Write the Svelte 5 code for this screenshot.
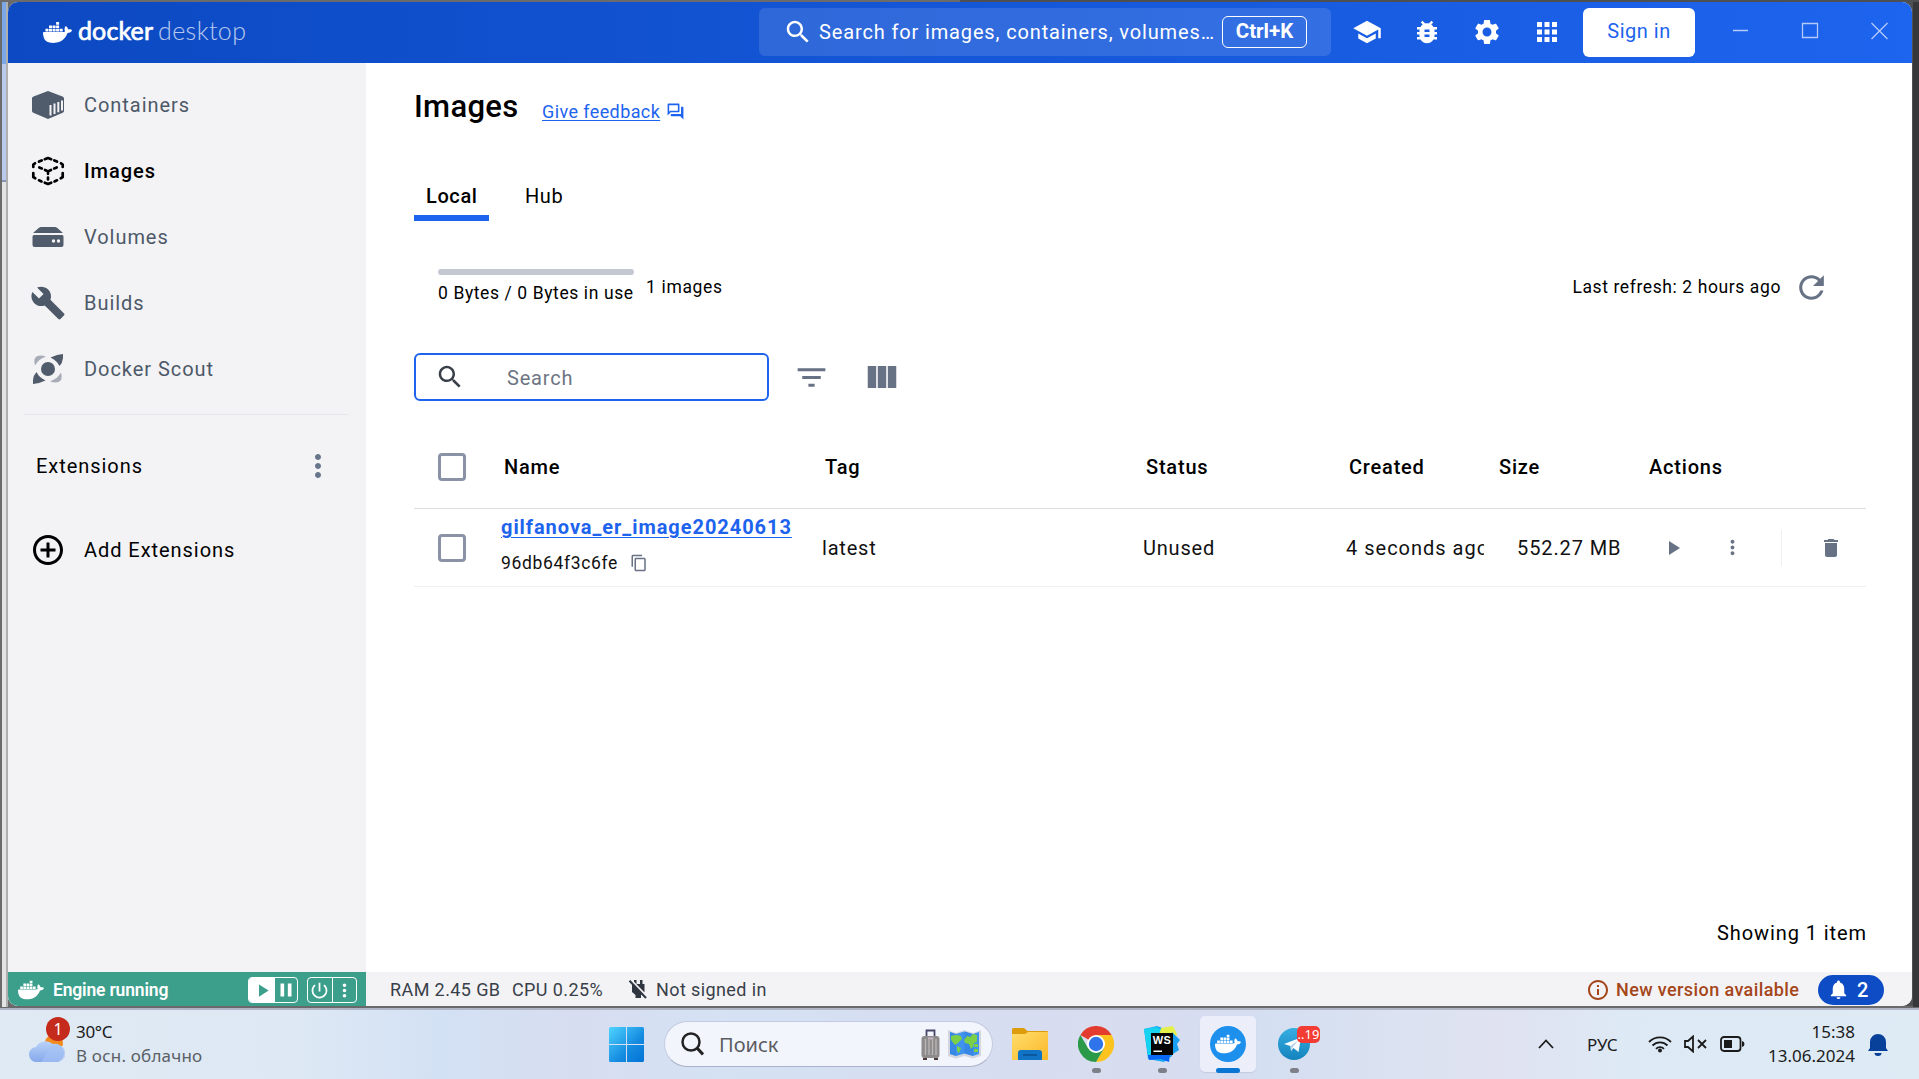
<script>
  const paths = {
    search: 'M15.5 14h-.79l-.28-.27C15.41 12.59 16 11.11 16 9.5 16 5.91 13.09 3 9.5 3S3 5.91 3 9.5 5.91 16 9.5 16c1.61 0 3.09-.59 4.23-1.57l.27.28v.79l5 4.99L20.49 19l-4.99-5zm-6 0C7.01 14 5 11.99 5 9.5S7.01 5 9.5 5 14 7.01 14 9.5 11.99 14 9.5 14z',
    school: 'M5 13.18v4L12 21l7-3.82v-4L12 17l-7-3.82zM12 3 1 9l11 6 9-4.91V17h2V9L12 3z',
    bug: 'M20 8h-2.81c-.45-.78-1.07-1.45-1.82-1.96L17 4.41 15.59 3l-2.17 2.17C12.96 5.06 12.49 5 12 5c-.49 0-.96.06-1.41.17L8.41 3 7 4.41l1.62 1.63C7.88 6.55 7.26 7.22 6.81 8H4v2h2.09c-.05.33-.09.66-.09 1v1H4v2h2v1c0 .34.04.67.09 1H4v2h2.81c1.04 1.79 2.97 3 5.19 3s4.15-1.21 5.19-3H20v-2h-2.09c.05-.33.09-.66.09-1v-1h2v-2h-2v-1c0-.34-.04-.67-.09-1H20V8zm-6 8h-4v-2h4v2zm0-4h-4v-2h4v2z',
    gear: 'M19.14 12.94c.04-.3.06-.61.06-.94 0-.32-.02-.64-.07-.94l2.03-1.58c.18-.14.23-.41.12-.61l-1.92-3.32c-.12-.22-.37-.29-.59-.22l-2.39.96c-.5-.38-1.03-.7-1.62-.94l-.36-2.54c-.04-.24-.24-.41-.48-.41h-3.84c-.24 0-.43.17-.47.41l-.36 2.54c-.59.24-1.13.57-1.62.94l-2.39-.96c-.22-.08-.47 0-.59.22L2.74 8.87c-.12.21-.08.47.12.61l2.03 1.58c-.05.3-.09.63-.09.94s.02.64.07.94l-2.03 1.58c-.18.14-.23.41-.12.61l1.92 3.32c.12.22.37.29.59.22l2.39-.96c.5.38 1.03.7 1.62.94l.36 2.54c.05.24.24.41.48.41h3.84c.24 0 .44-.17.47-.41l.36-2.54c.59-.24 1.13-.56 1.62-.94l2.39.96c.22.08.47 0 .59-.22l1.92-3.32c.12-.22.07-.47-.12-.61l-2.01-1.58zM12 15.6c-1.98 0-3.6-1.62-3.6-3.6s1.62-3.6 3.6-3.6 3.6 1.62 3.6 3.6-1.62 3.6-3.6 3.6z',
    apps: 'M4 8h4V4H4v4zm6 12h4v-4h-4v4zm-6 0h4v-4H4v4zm0-6h4v-4H4v4zm6 0h4v-4h-4v4zm6-10v4h4V4h-4zm-6 4h4V4h-4v4zm6 6h4v-4h-4v4zm0 6h4v-4h-4v4z',
    wrench: 'M22.7 19l-9.1-9.1c.9-2.3.4-5-1.5-6.9-2-2-5-2.4-7.4-1.3L9 6 6 9 1.6 4.7C.4 7.1.9 10.1 2.9 12.1c1.9 1.9 4.6 2.4 6.9 1.5l9.1 9.1c.4.4 1 .4 1.4 0l2.3-2.3c.5-.4.5-1.1.1-1.4z',
    forum: 'M15 4v7H5.17L4 12.17V4h11m1-2H3c-.55 0-1 .45-1 1v14l4-4h10c.55 0 1-.45 1-1V3c0-.55-.45-1-1-1zm5 4h-2v9H6v2c0 .55.45 1 1 1h11l4 4V7c0-.55-.45-1-1-1z',
    refresh: 'M17.65 6.35C16.2 4.9 14.21 4 12 4c-4.42 0-7.99 3.58-7.99 8s3.57 8 7.99 8c3.73 0 6.84-2.55 7.73-6h-2.08c-.82 2.33-3.04 4-5.65 4-3.31 0-6-2.69-6-6s2.69-6 6-6c1.66 0 3.14.69 4.22 1.78L13 11h7V4l-2.35 2.35z',
    addCircle: 'M13 7h-2v4H7v2h4v4h2v-4h4v-2h-4V7zm-1-5C6.48 2 2 6.48 2 12s4.48 10 10 10 10-4.48 10-10S17.52 2 12 2zm0 18c-4.41 0-8-3.59-8-8s3.59-8 8-8 8 3.59 8 8-3.59 8-8 8z',
    info: 'M11 7h2v2h-2zm0 4h2v6h-2zm1-9C6.48 2 2 6.48 2 12s4.48 10 10 10 10-4.48 10-10S17.52 2 12 2zm0 18c-4.41 0-8-3.59-8-8s3.59-8 8-8 8 3.59 8 8-3.59 8-8 8z',
    copy: 'M16 1H4c-1.1 0-2 .9-2 2v14h2V3h12V1zm3 4H8c-1.1 0-2 .9-2 2v14c0 1.1.9 2 2 2h11c1.1 0 2-.9 2-2V7c0-1.1-.9-2-2-2zm0 16H8V7h11v14z',
    trash: 'M6 19c0 1.1.9 2 2 2h8c1.1 0 2-.9 2-2V7H6v12zM19 4h-3.5l-1-1h-5l-1 1H5v2h14V4z',
    bell: 'M12 22c1.1 0 2-.9 2-2h-4c0 1.1.89 2 2 2zm6-6v-5c0-3.07-1.64-5.64-4.5-6.32V4c0-.83-.67-1.5-1.5-1.5s-1.5.67-1.5 1.5v.68C7.63 5.36 6 7.92 6 11v5l-2 2v1h16v-1l-2-2z',
    power: 'M13 3h-2v10h2V3zm4.83 2.17-1.42 1.42C17.99 7.86 19 9.81 19 12c0 3.87-3.13 7-7 7s-7-3.13-7-7c0-2.19 1.01-4.14 2.58-5.42L6.17 5.17C4.23 6.82 3 9.26 3 12c0 4.97 4.03 9 9 9s9-4.03 9-9c0-2.74-1.23-5.18-3.17-6.83z',
    columns: 'M14.67 5v14H9.33V5h5.34zm1 14H21V5h-5.33v14zm-7.34 0V5H3v14h5.33z',
    filter: 'M10 18h4v-2h-4v2zM3 6v2h18V6H3zm3 7h12v-2H6v2z',
    dots: 'M12 8c1.1 0 2-.9 2-2s-.9-2-2-2-2 .9-2 2 .9 2 2 2zm0 2c-1.1 0-2 .9-2 2s.9 2 2 2 2-.9 2-2-.9-2-2-2zm0 6c-1.1 0-2 .9-2 2s.9 2 2 2 2-.9 2-2-.9-2-2-2z',
    play: 'M8 5v14l11-7z',
    pause: 'M6 19h4V5H6v14zm8-14v14h4V5h-4z',
    whale: 'M13.983 11.078h2.119a.186.186 0 00.186-.185V9.006a.186.186 0 00-.186-.186h-2.119a.185.185 0 00-.185.185v1.888c0 .102.083.185.185.185m-2.954-5.43h2.118a.186.186 0 00.186-.186V3.574a.186.186 0 00-.186-.185h-2.118a.185.185 0 00-.185.185v1.888c0 .102.082.185.185.185m0 2.716h2.118a.187.187 0 00.186-.186V6.29a.186.186 0 00-.186-.185h-2.118a.185.185 0 00-.185.185v1.887c0 .102.082.185.185.186m-2.93 0h2.12a.186.186 0 00.184-.186V6.29a.185.185 0 00-.185-.185H8.1a.185.185 0 00-.185.185v1.887c0 .102.083.185.185.186m-2.964 0h2.119a.186.186 0 00.185-.186V6.29a.185.185 0 00-.185-.185H5.136a.186.186 0 00-.186.185v1.887c0 .102.084.185.186.186m5.893 2.715h2.118a.186.186 0 00.186-.185V9.006a.186.186 0 00-.186-.186h-2.118a.185.185 0 00-.185.185v1.888c0 .102.082.185.185.185m-2.93 0h2.12a.185.185 0 00.184-.185V9.006a.185.185 0 00-.184-.186h-2.12a.185.185 0 00-.184.185v1.888c0 .102.083.185.185.185m-2.964 0h2.119a.185.185 0 00.185-.185V9.006a.185.185 0 00-.184-.186h-2.12a.186.186 0 00-.186.186v1.887c0 .102.084.185.186.185m-2.92 0h2.12a.185.185 0 00.184-.185V9.006a.185.185 0 00-.184-.186h-2.12a.185.185 0 00-.184.185v1.888c0 .102.082.185.185.185M23.763 9.89c-.065-.051-.672-.51-1.954-.51-.338.001-.676.03-1.01.087-.248-1.7-1.653-2.53-1.716-2.566l-.344-.199-.226.327c-.284.438-.49.922-.612 1.43-.23.97-.09 1.882.403 2.661-.595.332-1.55.413-1.744.42H.751a.751.751 0 00-.75.748 11.376 11.376 0 00.692 4.062c.545 1.428 1.355 2.48 2.41 3.124 1.18.723 3.1 1.137 5.275 1.137.983.003 1.963-.086 2.93-.266a12.248 12.248 0 003.823-1.389c.98-.567 1.86-1.288 2.61-2.136 1.252-1.418 1.998-2.997 2.553-4.4h.221c1.372 0 2.215-.549 2.68-1.009.309-.293.55-.65.707-1.046l.098-.288Z'
  };

  const nav = ['Containers', 'Images', 'Volumes', 'Builds', 'Docker Scout'];
  const tools = ['school', 'bug', 'gear', 'apps'];
</script>

{#snippet icon(name, size)}
  <svg class="icon" width={size} height={size} viewBox="0 0 24 24"><path d={paths[name]} /></svg>
{/snippet}

<div class="desktop">
  <div class="edge left"><i class="sky"></i><i class="haze"></i></div>
  <div class="edge right"></div>

  <div class="window">
    <header class="titlebar">
      <div class="logo">
        {@render icon('whale', 29)}
        <svg class="wordmark" width="170" height="32" viewBox="0 0 170 32">
          <text x="0" y="24.500" class="w1" textLength="75">docker</text>
          <text x="80" y="24.500" class="w2" textLength="88">desktop</text>
        </svg>
      </div>
      <div class="omni">
        {@render icon('search', 30)}
        <span class="omni-text">Search for images, containers, volumes…</span>
        <kbd>Ctrl+K</kbd>
      </div>
      <div class="tools">
        {#each tools as t}{@render icon(t, 30)}{/each}
      </div>
      <button class="signin">Sign in</button>
      <svg class="controls" width="157" height="20" viewBox="0 0 157 20">
        <path d="M0 8.500h15M69.500 1.500h15v14h-15zM138.500 1l16 16M154.500 1l-16 16" />
      </svg>
    </header>

    <aside class="sidebar">
      <nav>
        {#each nav as item}
          <a class="nav-item" class:active={item === 'Images'}>
            <span class="nav-icon">
              {#if item === 'Containers'}
                <svg width="34" height="30" viewBox="0 0 34 30">
                  <path d="M17 1 31.500 6.500Q33 7 33 8.500V21q0 1.300-1.300 1.800L17 29 2.300 22.800Q1 22.300 1 21V8.500Q1 7 2.500 6.500z" />
                  <path class="slats" d="M19.500 15v10.500M23.500 13.500v10.500M27.300 12v10.300M31 10.500v10" />
                </svg>
              {:else if item === 'Images'}
                <svg class="cube" width="34" height="30" viewBox="0 0 34 30">
                  <path d="M13.800 3.200 17 2l3.200 1.200M8 5.600l2.700-1.200M23.300 4.400 26 5.600M2.300 11V8.500L4 7.300M31.700 11V8.500L30 7.300M2.300 17v4l2 1.300M31.700 17v4l-2 1.300M8 24.300l2.500 1.100M26 24.300l-2.500 1.100M13.800 26.700 17 28l3.200-1.300M8.300 11.400l2.500 1M25.700 11.400l-2.500 1M14 14l3 1.400 3-1.400M17 15.600v2.200M17 21.500v2" />
                </svg>
              {:else if item === 'Volumes'}
                <svg width="34" height="22" viewBox="0 0 34 22">
                  <path d="M10 1h14q1 0 2 .8L32 7H2l6-5.200Q9 1 10 1zM3 9h28q1.500 0 1.500 1.500V19q0 2-2 2h-27q-2 0-2-2v-8.500Q1.500 9 3 9z" />
                  <circle class="hole" cx="22.500" cy="15" r="1.700" /><circle class="hole" cx="27.500" cy="15" r="1.700" />
                </svg>
              {:else if item === 'Builds'}
                {@render icon('wrench', 36)}
              {:else}
                <svg width="32" height="32" viewBox="0 0 32 32">
                  <circle cx="16" cy="16" r="7" />
                  <path d="M31 1v4q-.5 5-3.500 8-2.500-5.500-9-8.500L25 2zM1 31v-4q.5-5 3.500-8 2.500 5.500 9 8.500L7 30z" />
                  <path class="pale" d="M3 12.500Q1 5 5 3.300 9 1.500 14 3.800 6.500 6 3 12.500zM29 19.500q2 7.500-2 9.200-4 1.800-9-.5 7.500-2.200 11-8.700z" />
                </svg>
              {/if}
            </span>
            {item}
          </a>
        {/each}
      </nav>
      <div class="ext-head"><span>Extensions</span>{@render icon('dots', 36)}</div>
      <div class="nav-item ext-add"><span class="nav-icon">{@render icon('addCircle', 36)}</span>Add Extensions</div>
    </aside>

    <main>
      <div class="heading">
        <h1>Images</h1>
        <a class="feedback">Give feedback</a>
        {@render icon('forum', 19)}
      </div>
      <div class="tabs"><span class="tab on">Local</span><span class="tab">Hub</span></div>
      <div class="usage">
        <div class="meter"><div class="track"></div><span>0 Bytes / 0 Bytes in use</span></div>
        <span class="count">1 images</span>
        <span class="refresh">Last refresh: 2 hours ago</span>
        {@render icon('refresh', 37)}
      </div>
      <div class="filters">
        <div class="input">{@render icon('search', 30)}<span>Search</span></div>
        {@render icon('filter', 37)}
        {@render icon('columns', 38)}
      </div>
      <div class="row head">
        <i class="box"></i><b class="shift">Name</b><b class="shift">Tag</b><b class="shift">Status</b><b class="shift">Created</b><b class="shift">Size</b><b class="shift">Actions</b>
      </div>
      <div class="row body">
        <i class="box"></i>
        <div class="name">
          <a>gilfanova_er_image20240613</a>
          <div class="hash"><span>96db64f3c6fe</span>{@render icon('copy', 18)}</div>
        </div>
        <span>latest</span>
        <span>Unused</span>
        <span class="created">4 seconds ago</span>
        <span class="size">552.27 MB</span>
        <div class="actions">
          {@render icon('play', 24)}
          {@render icon('dots', 23)}
          <i class="sep"></i>
          {@render icon('trash', 24)}
        </div>
      </div>
      <div class="showing">Showing 1 item</div>
    </main>

    <footer>
      <div class="engine">
        {@render icon('whale', 26)}
        <span class="engine-text">Engine running</span>
        <div class="pair"><span class="solid">{@render icon('play', 21)}</span><span>{@render icon('pause', 22)}</span></div>
        <div class="pair"><span>{@render icon('power', 21)}</span><span>{@render icon('dots', 21)}</span></div>
      </div>
      <div class="status">
        <span class="ram">RAM 2.45 GB</span>
        <span class="cpu">CPU 0.25%</span>
        <svg class="plug" width="18" height="19" viewBox="0 0 18 19">
          <path d="M5 0h2.500v4H5zM11 0h2.500v4H11zM3 4h12.500v8L12 15v3H6.500v-3L3 12z" />
          <path class="gap" d="M2 0 18 16.500" /><path class="slash" d="M.5.8 17 18" />
        </svg>
        <span class="signed">Not signed in</span>
        <span class="fill"></span>
        {@render icon('info', 24)}
        <span class="update">New version available</span>
        <span class="pill">{@render icon('bell', 23)}2</span>
      </div>
    </footer>
  </div>

  <div class="taskbar">
    <div class="weather">
      <svg width="36" height="44" viewBox="0 0 36 44">
        <defs><linearGradient id="cl" x1="0" y1="0" x2="0" y2="1"><stop offset="0" stop-color="#b9d2f8" /><stop offset="1" stop-color="#86a9ec" /></linearGradient></defs>
        <path d="M16 22a9 9 0 0 1 18 3l-4 4z" fill="#f28a1c" />
        <path d="M8 42a7.500 7.500 0 0 1-1-15A11 11 0 0 1 24 24a8.500 8.500 0 0 1 4 18z" fill="url(#cl)" />
        <path d="M18 33q2-8 10-8a8.500 8.500 0 0 1 0 17H12z" fill="#a6c3f5" opacity=".6" />
      </svg>
      <span class="alert">1</span>
      <div class="temps"><span class="t1">30°C</span><span class="t2">В осн. облачно</span></div>
    </div>

    <svg class="start" width="35" height="35" viewBox="0 0 35 35">
      <defs><linearGradient id="win" x1="0" y1="0" x2="35" y2="35" gradientUnits="userSpaceOnUse"><stop offset="0" stop-color="#4fd5ff" /><stop offset=".6" stop-color="#158be0" /><stop offset="1" stop-color="#0273d6" /></linearGradient></defs>
      <path fill="url(#win)" d="M1.500 0H17v17H0V1.500Q0 0 1.500 0zM18 0h15.500Q35 0 35 1.500V17H18zM0 18h17v17H1.500Q0 35 0 33.500zM18 18h17v15.500q0 1.500-1.500 1.500H18z" />
    </svg>
    <div class="find">
      <svg width="23" height="24" viewBox="0 0 23 24" fill="none" stroke="#222" stroke-width="2.500"><circle cx="10" cy="10" r="8.500" /><path d="m16 16 6 6.500" stroke-width="3" /></svg>
      <span>Поиск</span>
      <svg width="19" height="31" viewBox="0 0 19 31">
        <path d="M5.500 8V1.500h8V8" fill="none" stroke="#47476a" stroke-width="1.800" />
        <rect x=".5" y="7" width="18" height="22" rx="3" fill="#8e8b8c" />
        <path d="M4.500 10v16M8 11v15M11.500 11v15M15 10v16" stroke="#bab7b7" stroke-width="1.300" /><path d="M7 9.500h5.500" stroke="#c9b6c6" stroke-width="2" />
        <path d="M2 29h4v2H2zM13 29h4v2h-4z" fill="#4c3a38" />
      </svg>
      <svg width="33" height="30" viewBox="0 0 33 30">
        <path d="m0 1 8 3 8.500-3L25 4l8-3v26l-8 2.500-8.500-2.500L8 29.500 0 27z" fill="#d3d5df" />
        <path d="m2 3 6 2 8.500-2.500L25 5l6-2v22l-6 2-8.500-2.500L8 27l-6-2z" fill="#3f92ee" />
        <path d="M8 5v22L2 25V3zM25 5v22l-8.500-2.500v-22z" fill="#2f79d9" opacity=".45" />
        <path d="M3 7q5-2 10 0l1 3-4 4-3 2-4-5zM9 17l4 2-2 5-2-2zM16 11l3-4 3 1 3-3 4 1v7l-3 1-1 4-2 2-2-5-4-1zM26 15h4v3h-4zM26 20h4v3h-4z" fill="#7bd047" />
      </svg>
    </div>

    <div class="apps">
      <div class="app folder">
        <svg width="36" height="34" viewBox="0 0 36 34">
          <defs><linearGradient id="fo" x1="0" y1="0" x2="1" y2="1"><stop offset="0" stop-color="#ffdd6b" /><stop offset="1" stop-color="#fbb829" /></linearGradient></defs>
          <path d="M0 2.500Q0 1 1.500 1H12l3.500 3H35q1 0 1 1v5H0z" fill="#dd9c0c" />
          <path d="M0 7h13l3-2h20v28H0z" fill="url(#fo)" />
          <path d="M6 33V26q0-3 3-3h18q3 0 3 3v7z" fill="#1173c6" /><path d="M11 28h14" stroke="#0b4f92" stroke-width="1.500" />
        </svg>
      </div>
      <div class="app chrome">
        <svg width="36" height="36" viewBox="0 0 36 36">
          <path d="M18 18 2.400 9A18 18 0 0 1 33.600 9z" fill="#e33b2e" />
          <path d="M18 9h15.600A18 18 0 0 1 18 36l7.800-13.500z" fill="#fcc31e" />
          <path d="M2.400 9A18 18 0 0 0 18 36l7.800-13.500H10.200z" fill="#2a9a48" />
          <circle cx="18" cy="18" r="9" fill="#fff" /><circle cx="18" cy="18" r="7.200" fill="#2f74ea" />
        </svg>
        <i class="run"></i>
      </div>
      <div class="app ws">
        <svg width="36" height="36" viewBox="0 0 36 36">
          <path d="M0 3 13 0l8 3 8 5-1 22-8 6-16-3z" fill="#16a8f5" />
          <path d="m0 3 13-2 7 5-10 25-6-2z" fill="#16d3f0" /><path d="M17 2 29 0l4 8-2 5H14z" fill="#e6f04b" />
          <path d="m28 6 8 8-3 4 2 6-9 6z" fill="#1b9ff0" /><path d="m4 29 22-1-1 8-8-3-12 1z" fill="#0a67f5" />
          <rect x="7" y="7" width="22" height="22" fill="#050505" />
          <text x="8.800" y="17.500" class="ws-text" textLength="18">WS</text><path d="M9.500 24.500h8.500v1.500h-8.500z" fill="#fff" />
        </svg>
        <i class="run"></i>
      </div>
      <div class="app docker">
        <span class="disc">{@render icon('whale', 26)}</span>
        <i class="run wide"></i>
      </div>
      <div class="app tg">
        <svg width="32" height="32" viewBox="0 0 32 32">
          <defs><linearGradient id="te" x1="0" y1="0" x2="0" y2="1"><stop offset="0" stop-color="#37aee2" /><stop offset="1" stop-color="#1483bd" /></linearGradient></defs>
          <circle cx="16" cy="16" r="16" fill="url(#te)" />
          <path d="M6 16 23 9.500l-2.500 14.500-5-4-2.500 3-.5-5z" fill="#fff" /><path d="m12.500 18 8-6-6 7.500-1.500 3.500z" fill="#b5d4ea" />
        </svg>
        <span class="unread">..19</span>
        <i class="run"></i>
      </div>
    </div>

    <div class="tray">
      <svg class="chev" width="16" height="10" viewBox="0 0 16 10"><path d="m1 9 7-7.500L15 9" /></svg>
      <span class="lang">РУС</span>
      <svg class="wifi" width="24" height="18" viewBox="0 0 24 18"><path d="M1 7a15.500 15.500 0 0 1 22 0M4.500 10.500a10.600 10.600 0 0 1 15 0M8 13.800a5.600 5.600 0 0 1 8 0" /><circle cx="12" cy="15.500" r="2" /></svg>
      <svg class="vol" width="24" height="18" viewBox="0 0 24 18"><path d="M1 6h3l5-4.500v15L4 12H1zM14 5l8 8M22 5l-8 8" /></svg>
      <svg class="bat" width="25" height="16" viewBox="0 0 25 16"><rect x="1" y="1" width="19.500" height="14" rx="3" /><path class="solid-fill" d="M4 4h8v8H4zM22 5q2.500.5 2.500 3T22 11z" /></svg>
      <div class="clock"><span>15:38</span><span>13.06.2024</span></div>
      <svg class="tbell" width="20" height="23" viewBox="0 0 20 23"><path d="M2 15V9a8 8 0 0 1 16 0v6l2 3H0zM6.500 20h7a3.500 3 0 0 1-7 0z" /></svg>
    </div>
  </div>
</div>

<style>
  :global(body) { margin: 0; background: #5b5b5b; overflow: hidden; }
  .desktop { position: relative; box-sizing: border-box; width: 1919px; height: 1079px; padding-top: 2px; background: linear-gradient(90deg, #6b6b6b 0 960px, #4d4f51 960px); font-family: Roboto, "Liberation Sans", sans-serif; display: flex; flex-direction: column; }
  .desktop :is(h1, a, b, i) { font-style: normal; }
  .icon { display: block; flex: none; fill: currentColor; }
  svg { flex: none; }
  .edge { position: absolute; top: 2px; height: 1005px; }
  .edge.left { left: 2px; width: 4px; background: #e4e4e4; border-right: 2px solid #afafb0; }
  .edge i { display: block; }
  .sky { height: 62px; background: #7ba7e6; }
  .haze { height: 116px; background: #b9caea; border-bottom: 2px solid #8794b4; }
  .edge.right { right: 0; width: 6px; background: #353739; }

  .window { position: relative; flex: none; width: 1904px; height: 1004px; margin-left: 8px; display: grid; grid-template: 61px 909px 34px / 358px 1fr; border-radius: 10px; overflow: hidden; background: #fff; }
  .titlebar { grid-column: 1 / 3; box-sizing: border-box; padding-bottom: 1px; display: flex; align-items: center; background: linear-gradient(90deg, #0c49c2, #1d64ee); color: #fff; }
  .logo { display: flex; align-items: center; width: 751px; padding-left: 35px; box-sizing: border-box; }
  .wordmark { margin: -2px 0 0 6px; font-family: Lato, sans-serif; font-size: 25px; fill: #fff; }
  .w1 { font-weight: 400; stroke: #fff; stroke-width: .7; }
  .w2 { font-weight: 300; opacity: .7; }
  .omni { box-sizing: border-box; width: 572px; height: 48px; border-radius: 6px; background: rgba(255,255,255,.12); display: flex; align-items: center; padding-left: 24px; }
  .omni-text { width: 403px; margin-left: 6px; font-size: 20px; letter-spacing: .88px; white-space: nowrap; line-height: 24px; padding-bottom: 1px; }
  .omni-text { letter-spacing: .86px; }
  kbd { box-sizing: border-box; width: 85px; height: 32px; border: 1.500px solid #fff; border-radius: 6px; font: 700 20.500px/29px Roboto, sans-serif; text-align: center; }
  .tools { display: flex; gap: 30px; margin-left: 21px; }
  .signin { width: 112px; height: 49px; margin: 0 0 0 21px; padding: 0 0 2px; border: 0; border-radius: 6px; background: #fff; color: #1d63ed; font: 20px Roboto, sans-serif; letter-spacing: .5px; }
  .controls { margin-left: 38px; fill: none; stroke: #b4cbf9; stroke-width: 1.300; }

  .sidebar { background: #f3f3f6; color: #000; }
  nav { margin: 9px 18px 0 16px; padding-bottom: 12px; height: 330px; border-bottom: 1px solid #e5e6e9; }
  .nav-item { display: flex; align-items: center; height: 66px; font-size: 20px; letter-spacing: .95px; color: #4d5968; }
  .nav-icon { display: flex; justify-content: center; width: 48px; margin-right: 12px; fill: #505b6b; }
  .active { color: #000; font-weight: 500; letter-spacing: .95px; }
  .slats { stroke: #f3f3f6; stroke-width: 2; }
  .cube { fill: none; stroke: #000; stroke-width: 2.700; stroke-linecap: round; stroke-linejoin: round; }
  .hole { fill: #f3f3f6; }
  .pale { fill: #a7acb7; }
  .ext-head { display: flex; align-items: center; justify-content: space-between; height: 60px; margin: 21px 30px 0 28px; font-size: 20px; letter-spacing: .95px; }
  .ext-head .icon { color: #67758a; }
  .ext-add { margin: 21px 16px 0; color: #000; }

  main { padding: 0 46px 0 48px; display: flex; flex-direction: column; }
  .heading { display: flex; align-items: baseline; padding-top: 24px; height: 40px; color: #1d63ed; }
  h1 { margin: 0; width: 128px; font-size: 31px; line-height: 40px; font-weight: 500; letter-spacing: .3px; color: #000; }
  .feedback { width: 124px; font-size: 18px; letter-spacing: .4px; text-decoration: underline; text-underline-offset: 2px; text-decoration-thickness: 1px; white-space: nowrap; position: relative; top: 1px; }
  .heading .icon { align-self: center; margin-top: 9px; }
  .tabs { display: flex; gap: 24px; height: 50px; margin-top: 44px; font-size: 20px; line-height: 50px; letter-spacing: .6px; }
  .tab { padding: 0 12px; }
  .on { box-sizing: border-box; width: 75px; font-weight: 500; border-bottom: 6px solid #1d63ed; }
  .usage { display: flex; align-items: center; height: 44px; margin: 44px 54px 0 24px; font-size: 17.500px; letter-spacing: .65px; white-space: nowrap; }
  .meter { width: 196px; }
  .track { height: 6px; margin: 1px 0 4px; border-radius: 3px; background: #c4c8d1; }
  .meter span { display: block; line-height: 28px; letter-spacing: .6px; }
  .count { margin-left: 12px; }
  .refresh { margin-left: auto; margin-right: 12px; letter-spacing: .6px; }
  .usage .icon { color: #677285; margin-right: -18px; }
  .filters { display: flex; align-items: center; height: 48px; margin-top: 44px; color: #677285; }
  .input { box-sizing: border-box; width: 355px; height: 48px; display: flex; align-items: center; padding-left: 19px; margin-right: 24px; border: 2px solid #1d63ed; border-radius: 6px; color: #393f49; }
  .input span { margin-left: 42px; padding-top: 2px; color: #6d7583; font-size: 20px; letter-spacing: .8px; }
  .filters > .icon + .icon { margin-left: 33px; }
  .row { box-sizing: border-box; display: grid; grid-template-columns: 63px 321px 321px 203px 150px 150px 1fr; align-items: center; padding-left: 24px; font-size: 20px; letter-spacing: .8px; white-space: nowrap; border-bottom: 1px solid #dcdde0; }
  .head { height: 82px; margin-top: 26px; padding-bottom: 2px; }
  .head b { font-weight: 500; }
  .shift { padding-left: 3px; }
  .box { box-sizing: border-box; width: 28px; height: 28px; border: 3px solid #8993a5; border-radius: 4px; }
  .body { height: 78px; border-color: #f0f0f2; color: #111; }
  .name { padding-top: 4px; }
  .name a { display: block; color: #1d63ed; font-weight: 700; line-height: 26px; letter-spacing: .95px; text-decoration: underline; text-underline-offset: 3px; text-decoration-thickness: 1px; }
  .hash { display: flex; align-items: center; height: 46px; font-size: 17.500px; letter-spacing: .65px; }
  .hash span { width: 129px; }
  .hash .icon, .actions { color: #677285; }
  .created { width: 138px; overflow: hidden; letter-spacing: 1px; }
  .size { padding-left: 21px; letter-spacing: .9px; }
  .actions { display: flex; align-items: center; margin-left: 15px; }
  .actions .icon:nth-child(2) { margin-left: 36px; }
  .sep { width: 1px; height: 36px; margin: 0 37px 0 37px; background: #f0f0f2; }
  .showing { margin-top: auto; padding-bottom: 25px; text-align: right; font-size: 20px; line-height: 28px; letter-spacing: .92px; margin-right: -1px; }

  footer { grid-column: 1 / 3; display: grid; grid-template-columns: 358px 1fr; background: #f3f3f6; }
  .engine { display: flex; align-items: center; padding: 2px 0 0 10px; background: #3c9f8c; color: #fff; }
  .engine-text { width: 195px; margin-left: 9px; font-size: 17.500px; font-weight: 600; letter-spacing: -.17px; }
  .pair { box-sizing: border-box; display: flex; width: 50px; height: 26px; margin-right: 9px; border: 1.500px solid #fff; border-radius: 4px; overflow: hidden; }
  .pair span { flex: 1; display: flex; align-items: center; justify-content: center; }
  .pair span + span { border-left: 1px solid #fff; }
  .pair .solid { padding-left: 2px; background: #fff; color: #3c9f8c; }
  .status { display: flex; align-items: center; padding: 1px 28px 0 24px; font-size: 18px; letter-spacing: .4px; color: #393f49; white-space: nowrap; }
  .ram { width: 122px; }
  .cpu { width: 117px; }
  .plug { fill: #30363f; }
  .gap { stroke: #f3f3f6; stroke-width: 2; }
  .slash { stroke: #30363f; stroke-width: 2; }
  .signed { margin-left: 9px; }
  .fill { flex: 1; }
  .status > .icon, .update { color: #a5461a; }
  .update { width: 202px; margin-left: 6px; font-weight: 500; letter-spacing: .4px; }
  .pill { box-sizing: border-box; display: flex; align-items: center; gap: 7px; width: 66px; height: 30px; padding-left: 9px; border-radius: 15px; background: #0e4cc6; color: #fff; font-size: 20px; font-weight: 500; }

  .taskbar { flex: 1; box-sizing: border-box; padding-top: 1px; display: flex; align-items: center; border-top: 2px solid #69696c; box-shadow: inset 0 2px #afb5c4; background: linear-gradient(90deg, #dfeaf4 0, #dde8f4 300px, #d3e1f4 440px, #d7ddf0 580px, #d4e2f4 720px, #d6def1 900px, #d8dcef 1150px, #d4dff1 1270px, #dbe2f1 1400px, #e0e2f1 1500px, #dde9f4 1620px, #deebf5 1919px); font-family: "Noto Sans", "Open Sans", sans-serif; color: #1b1b1b; }
  .weather { position: relative; display: flex; align-items: center; width: 580px; padding-left: 29px; }
  .weather > svg { margin-top: -4px; }
  .alert { position: absolute; left: 46px; top: -3px; width: 24px; height: 24px; border-radius: 50%; background: #c42b1c; color: #fff; font-size: 16px; line-height: 24px; text-align: center; }
  .temps { display: flex; flex-direction: column; margin-left: 11px; font-size: 17px; line-height: 24px; }
  .t1 { letter-spacing: -.3px; }
  .t2 { color: #5b5f66; letter-spacing: .2px; }
  .start { margin-right: 20px; }
  .find { box-sizing: border-box; display: flex; align-items: center; width: 329px; height: 46px; padding-left: 16px; border: 1.500px solid #c3cbe0; border-bottom-color: #a9b2c8; border-radius: 23px; background: #f2f5fc; }
  .find span { width: 202px; margin-left: 15px; font-size: 20px; color: #5b5c61; }
  .find svg + svg { margin-left: 8px; }
  .apps { display: flex; margin-left: 4px; }
  .app { position: relative; display: flex; align-items: center; justify-content: center; width: 56px; height: 56px; margin-right: 10px; border-radius: 5px; }
  .folder { margin-left: 5px; }
  .docker { background: #eceffa; box-shadow: 0 1px 1px #c3cade; }
  .disc { display: flex; align-items: center; justify-content: center; width: 36px; height: 36px; border-radius: 50%; background: #1d8fed; color: #fff; }
  .run { position: absolute; bottom: -1px; left: 50%; width: 9px; height: 5px; margin-left: -4px; border-radius: 3px; background: #7d8088; }
  .wide { width: 24px; margin-left: -12px; background: #0a76d4; }
  .unread { position: absolute; left: 31px; top: 10px; width: 23px; height: 17px; border-radius: 5px; background: #f23c34; color: #fff; font-size: 13px; line-height: 17px; text-align: center; }
  .ws-text { font: 700 11px "Liberation Sans", sans-serif; fill: #fff; }
  .tray { display: flex; align-items: center; margin-left: auto; padding-right: 31px; font-size: 17px; }
  .tray svg { fill: none; stroke: #1b1b1b; stroke-width: 1.800; }
  .lang { width: 61px; margin-left: 33px; }
  .wifi { margin-right: 12px; }
  .wifi circle, .tray .solid-fill { fill: #1b1b1b; stroke: none; }
  .vol { margin-right: 12px; }
  .clock { display: flex; flex-direction: column; align-items: flex-end; width: 110px; line-height: 24px; letter-spacing: 0; }
  .tray .tbell { margin-left: 13px; fill: #07419a; stroke: none; }
</style>
